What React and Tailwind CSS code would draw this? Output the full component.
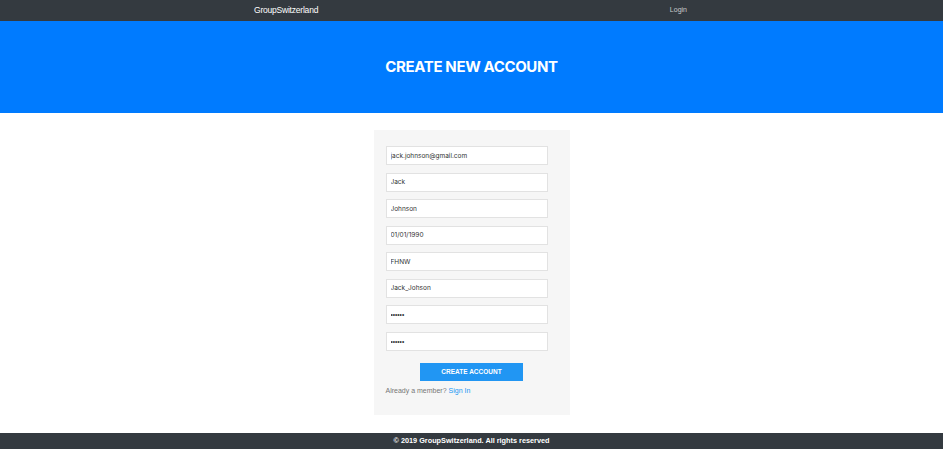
const FIELDS = [
  { value: 'jack.johnson@gmail.com', type: 'text' },
  { value: 'Jack', type: 'text' },
  { value: 'Johnson', type: 'text' },
  { value: '01/01/1990', type: 'text' },
  { value: 'FHNW', type: 'text' },
  { value: 'Jack_Johson', type: 'text' },
  { value: 'secret', type: 'password' },
  { value: 'secret', type: 'password' },
];

export default function App() {
  return (
    <div className="h-[449px] flex flex-col bg-white font-['Liberation_Sans',Arial,sans-serif]">
      <nav className="h-[21px] bg-[#343a40] shrink-0">
        <div className="w-[449px] mx-auto h-full flex items-center justify-between pl-[7px] pr-[9px]">
          <span className="text-white text-[8.5px] font-medium tracking-tight">GroupSwitzerland</span>
          <span className="text-[#c9cbcd] text-[7px]">Login</span>
        </div>
      </nav>

      <header className="h-[92px] bg-[#007bff] flex items-center justify-center shrink-0">
        <h1 className="text-white text-[15px] font-bold tracking-tight font-['Inter',sans-serif]">CREATE NEW ACCOUNT</h1>
      </header>

      <main className="flex-1 flex justify-center pt-[17px]">
        <div className="w-[196px] h-[285px] bg-[#f6f6f6] pt-[16px] pl-[12px] pr-[22px]">
          <div className="flex flex-col gap-[7.5px]">
            {FIELDS.map((f, i) => (
              <input
                key={i}
                type={f.type}
                defaultValue={f.value}
                className={
                  f.type === 'password'
                    ? "h-[19px] w-full bg-white border border-[#e2e2e2] px-[4px] text-[6.5px] leading-[12px] text-[#333] outline-none"
                    : "h-[19px] w-full bg-white border border-[#e2e2e2] px-[4px] text-[6.5px] leading-[12px] text-[#333] outline-none font-['Inter',sans-serif]"
                }
              />
            ))}
          </div>
          <div className="flex justify-center mt-[12px] pl-[10px]">
            <button className="w-[103px] h-[18px] bg-[#2196f3] text-white text-[6.5px] font-bold">CREATE ACCOUNT</button>
          </div>
          <p className="mt-[5px] text-[7px] text-[#777]">
            Already a member? <span className="text-[#2196f3] font-medium">Sign In</span>
          </p>
        </div>
      </main>

      <footer className="h-[16px] bg-[#343a40] flex items-center justify-center shrink-0">
        <span className="text-white text-[7.3px] font-bold">© 2019 GroupSwitzerland. All rights reserved</span>
      </footer>
    </div>
  );
}
